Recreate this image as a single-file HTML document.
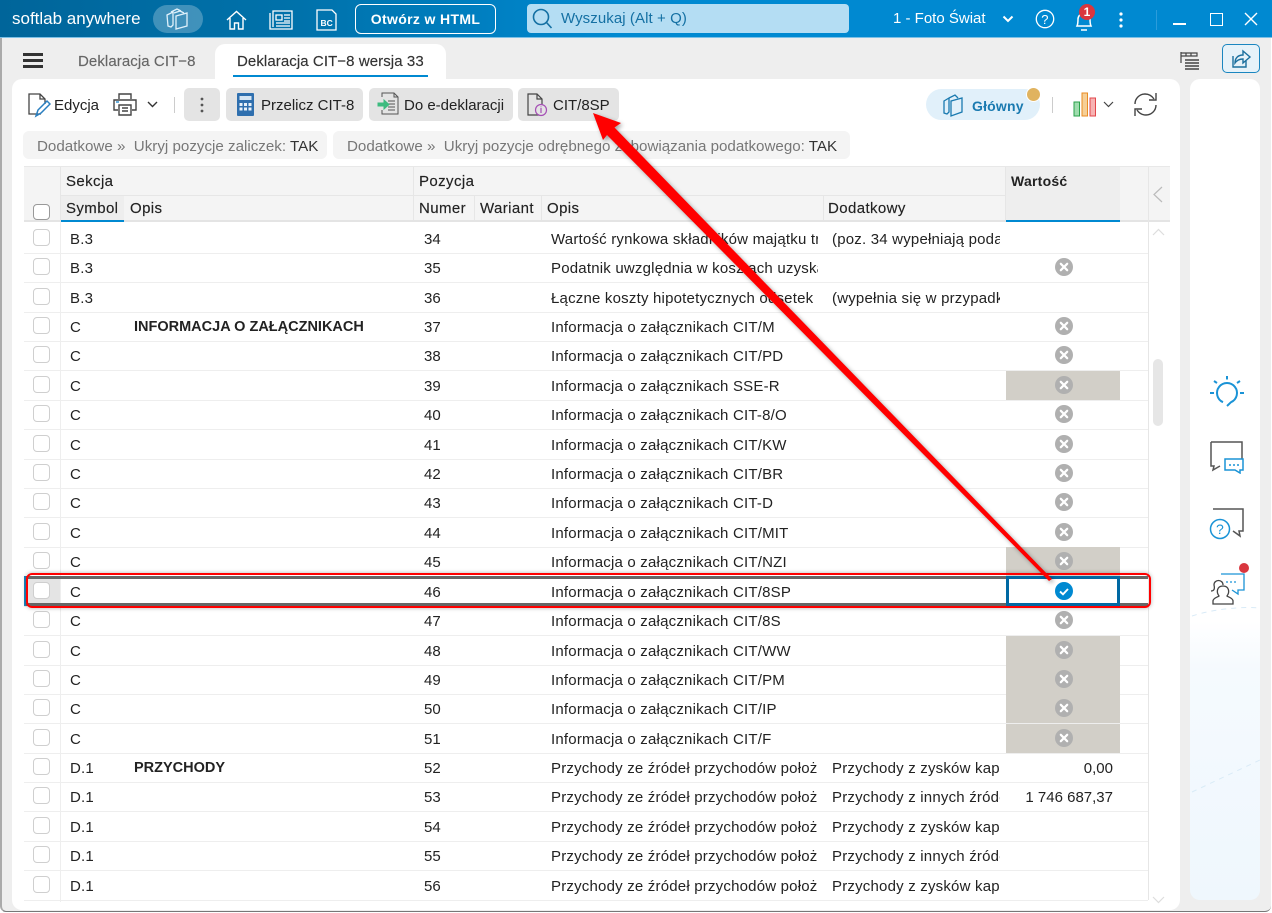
<!DOCTYPE html>
<html lang="pl"><head><meta charset="utf-8"><title>Deklaracja CIT-8</title>
<style>
html,body{margin:0;padding:0}
body{width:1272px;height:913px;overflow:hidden;position:relative;background:#fff;font-family:"Liberation Sans",sans-serif;font-size:15px;color:#222}
.a{position:absolute}
.win{left:0;top:0;width:1269px;height:911px;background:#eee;border-left:2px solid #aaa;border-bottom:1.500px solid #777;box-sizing:content-box;border-radius:0 0 6px 6px}
.tb{left:0;top:0;width:1272px;height:37px;background:linear-gradient(90deg,#00659a 0,#0072ab 300px,#0089d1 620px,#0089d1 100%);border-bottom:1px solid #7cc0e6}
.card{left:12px;top:79px;width:1168px;height:831px;background:#fff;border-radius:10px}
.side{left:1190px;top:79px;width:70px;height:821px;border-radius:10px;background:linear-gradient(180deg,#fff 0,#fff 66%,#f5fafe 72%,#eff7fd 100%)}
.btn{background:#e4e4e4;border-radius:5px;height:33px;top:88px;line-height:33px}
.chip{top:131px;height:28px;line-height:32px;background:#f4f4f4;border-radius:6px;color:#777;white-space:nowrap;font-size:15.150px}
.chip b{font-weight:400;color:#333}
.hd{left:24px;top:166px;width:1146px;height:53px;background:#f4f4f4;border-top:1px solid #e8e8e8;border-bottom:2px solid #e4e4e4;box-sizing:content-box}
.ht{position:absolute;font-weight:400;color:#222;letter-spacing:.4px;white-space:nowrap;font-size:15px;line-height:17px;-webkit-text-stroke:.15px #222}
.vl{position:absolute;width:1px;background:#e6e6e6}
.r{position:absolute;left:0;width:1148px;height:29px;line-height:31px;white-space:nowrap;letter-spacing:.2px}
.r:after{content:"";position:absolute;left:24px;right:0;bottom:-1px;height:1px;background:#eee}
.r span,.r i,.r svg{position:absolute;font-style:normal}
.c{left:33px;top:5px;width:15px;height:15px;border:1px solid #cfcfcf;border-radius:4px;background:#fff}
.s{left:70px}.t{left:134px;font-weight:700;letter-spacing:0;font-size:14.500px}.n{left:424px;letter-spacing:0}
.o{left:551px;width:267px;overflow:hidden}
.d{left:832px;width:168px;overflow:hidden}
.v{left:1000px;width:113px;text-align:right;letter-spacing:0}
.g{left:1006px;top:0;width:114px;height:29px;background:#d2cfc8}
.x{left:1055px;top:5px;width:18px;height:18px}
</style></head><body>
<svg width="0" height="0" style="position:absolute"><defs>
<symbol id="xi" viewBox="0 0 18 18"><circle cx="9" cy="9" r="9" fill="#b0b0b0"/><path d="M5.800 5.800l6.400 6.400M12.200 5.800l-6.400 6.400" stroke="#fff" stroke-width="2.200" stroke-linecap="round"/></symbol>
</defs></svg>
<div class="a win"></div>
<div class="a tb"></div>
<div class="a" style="left:12px;top:8px;color:#fff;font-size:17px;line-height:21px">softlab anywhere</div>
<div class="a" style="left:153px;top:5px;width:50px;height:28px;border-radius:14px;background:rgba(255,255,255,.25)"></div>
<svg class="a" style="left:165px;top:7px" width="26" height="24" fill="none" stroke="#dff1fb" stroke-width="1.300"><path d="M2 8l6-3v13l-2 2-3-1zM6 5l6-3 4 2M9 6l6-2 4 2"/><path d="M11 9l11-3v13l-11 3z"/></svg>
<svg class="a" style="left:226px;top:10px" width="21" height="21" fill="none" stroke="#fff" stroke-width="1.400"><path d="M1 10L10.500 1.500 20 10M4 8v11h4.500v-6h4v6H17V8"/></svg>
<svg class="a" style="left:269px;top:10px" width="24" height="20" fill="none" stroke="#fff" stroke-width="1.300"><path d="M1 3v16h22V1H4v16"/><path d="M7 5h6v5H7zM15 5h6M15 8h6M15 11h6M7 13h14M7 16h14"/></svg>
<svg class="a" style="left:316px;top:9px" width="21" height="22" fill="none" stroke="#fff" stroke-width="1.300"><path d="M1 1h15l4 4v16H1z"/><text x="4.500" y="17" font-family="Liberation Sans" font-size="8.500" font-weight="700" fill="#fff" stroke="none">BC</text></svg>
<div class="a" style="left:355px;top:4px;width:139px;height:28px;border:1.500px solid #fff;border-radius:6px;text-align:center;line-height:28px;color:#fff;font-weight:700;font-size:14px;letter-spacing:.35px">Otwórz w HTML</div>
<div class="a" style="left:527px;top:4px;width:322px;height:29px;background:#b4ddf3;border-radius:4px;line-height:29px;color:#1470a3;text-indent:34px;font-size:15px;letter-spacing:.08px">Wyszukaj (Alt + Q)</div>
<svg class="a" style="left:531px;top:7px" width="22" height="23" fill="none" stroke="#1470a3" stroke-width="1.600"><circle cx="10" cy="10" r="7.500"/><path d="M15.500 15.500l5 5.500"/></svg>
<div class="a" style="left:893px;top:9px;color:#fff;font-size:15px;line-height:20px">1 - Foto Świat</div>
<svg class="a" style="left:1002px;top:15px" width="12" height="8" fill="none" stroke="#fff" stroke-width="2"><path d="M1.500 1.500L6 6l4.500-4.500"/></svg>
<svg class="a" style="left:1035px;top:9px" width="20" height="20" fill="none" stroke="#fff" stroke-width="1.300"><circle cx="10" cy="10" r="8.700"/><text x="6.200" y="15" font-family="Liberation Sans" font-size="13" fill="#fff" stroke="none">?</text></svg>
<svg class="a" style="left:1074px;top:8px" width="20" height="24" fill="none" stroke="#fff" stroke-width="1.500"><path d="M3 18c1-2 1-4 1-7 0-3 3-6 6-6s6 3 6 6c0 3 0 5 1 7z"/><path d="M7 22h6"/></svg>
<div class="a" style="left:1079px;top:4px;width:16px;height:16px;border-radius:8px;background:#d9363e;color:#fff;font-weight:700;font-size:12px;line-height:16px;text-align:center">1</div>
<svg class="a" style="left:1119px;top:12px" width="4" height="16" fill="#fff"><circle cx="2" cy="2" r="1.600"/><circle cx="2" cy="8" r="1.600"/><circle cx="2" cy="14" r="1.600"/></svg>
<div class="a" style="left:1156px;top:10px;width:1px;height:20px;background:#2b9cdb"></div>
<div class="a" style="left:1173px;top:23px;width:13px;height:1.500px;background:#fff"></div>
<div class="a" style="left:1210px;top:13px;width:11px;height:11px;border:1.500px solid #fff"></div>
<svg class="a" style="left:1244px;top:12px" width="14" height="14" stroke="#fff" stroke-width="1.400"><path d="M1 1l12 12M13 1L1 13"/></svg>

<div class="a" style="left:23px;top:53px;width:20px;height:2.500px;background:#333"></div>
<div class="a" style="left:23px;top:59px;width:20px;height:2.500px;background:#333"></div>
<div class="a" style="left:23px;top:65px;width:20px;height:2.500px;background:#333"></div>
<div class="a" style="left:78px;top:52px;color:#666;font-size:15px;line-height:20px;letter-spacing:.08px;-webkit-text-stroke:.15px #666">Deklaracja CIT−8</div>
<div class="a" style="left:215px;top:44px;width:231px;height:36px;background:#fff;border-radius:10px 10px 0 0"></div>
<div class="a" style="left:237px;top:52px;color:#333;font-size:15px;line-height:20px;letter-spacing:.08px;-webkit-text-stroke:.15px #333">Deklaracja CIT−8 wersja 33</div>
<div class="a" style="left:233px;top:75px;width:195px;height:2px;background:#0089d1"></div>
<svg class="a" style="left:1179px;top:50px" width="22" height="22" fill="none" stroke="#444" stroke-width="1.200"><path d="M2 2v11M2 3h5v3H2M7 3h5v3H7M12 3h6v3h-6"/><path d="M6 10h14M6 13h14M6 16h14M6 19h14" stroke-width="1.500"/></svg>
<div class="a" style="left:1222px;top:44px;width:36px;height:27px;border:1.500px solid #1a86c0;border-radius:5px;background:#e6f2f9"></div>
<svg class="a" style="left:1230px;top:47px" width="22" height="24" fill="none" stroke="#1a6f9e" stroke-width="1.400"><path d="M3 9v11h13v-6"/><path d="M5 16c0-5 3-8 8-8V4l7 6-7 6v-4c-3 0-6 1-8 4z"/></svg>

<div class="a card"></div>
<div class="a side"></div>

<svg class="a" style="left:27px;top:92px" width="24" height="26" fill="none" stroke="#444" stroke-width="1.300"><path d="M14 22H2V2h11l5 5v5"/><path d="M13 2v5h5"/><path d="M9 24l2-6 9-9 3 3-9 9z" stroke="#2a7fc0" stroke-width="1.500"/></svg>
<div class="a" style="left:54px;top:96px;line-height:20px">Edycja</div>
<svg class="a" style="left:113px;top:92px" width="24" height="25" fill="none" stroke="#444" stroke-width="1.400"><path d="M6 7V2h12v5"/><path d="M5 18H1V8h22v10h-4"/><path d="M6 13h12v10H6zM9 16h6M9 19h6"/><path d="M3 10h3" stroke="#2a8fd0"/></svg>
<svg class="a" style="left:147px;top:101px" width="11" height="7" fill="none" stroke="#333" stroke-width="1.400"><path d="M1 1l4.500 4.500L10 1"/></svg>
<div class="a" style="left:174px;top:97px;width:1px;height:16px;background:#ccc"></div>
<div class="a btn" style="left:184px;width:36px"></div>
<svg class="a" style="left:200px;top:97px" width="4" height="16" fill="#555"><circle cx="2" cy="2" r="1.400"/><circle cx="2" cy="8" r="1.400"/><circle cx="2" cy="14" r="1.400"/></svg>
<div class="a btn" style="left:226px;width:137px"></div>
<svg class="a" style="left:237px;top:93px" width="17" height="23"><rect width="17" height="23" rx="1" fill="#2f6fae"/><rect x="2.500" y="3" width="12" height="4" fill="#d5e5f3"/><g fill="#e8f1f9"><rect x="2.500" y="10" width="3" height="3"/><rect x="7" y="10" width="3" height="3"/><rect x="11.500" y="10" width="3" height="3"/><rect x="2.500" y="14.500" width="3" height="3"/><rect x="7" y="14.500" width="3" height="3"/><rect x="11.500" y="14.500" width="3" height="3"/></g></svg>
<div class="a" style="left:261px;top:96px;line-height:20px">Przelicz CIT-8</div>
<div class="a btn" style="left:369px;width:144px"></div>
<svg class="a" style="left:377px;top:92px" width="24" height="24" fill="none" stroke="#555" stroke-width="1"><path d="M5 5V1h12l4 4v17H5v-4M17 1v4h4M11 9h7M11 12h7M11 15h7M11 18h7"/><path d="M1 11h6V8l5 4.500-5 4.500v-3H1z" fill="#3dbb7f" stroke="#3dbb7f"/></svg>
<div class="a" style="left:404px;top:96px;line-height:20px">Do e-deklaracji</div>
<div class="a btn" style="left:518px;width:101px"></div>
<svg class="a" style="left:526px;top:93px" width="22" height="24" fill="none" stroke="#444" stroke-width="1.200"><path d="M13 22H2V1h9l5 5v6"/><path d="M11 1v5h5"/><circle cx="15" cy="17" r="5.500" stroke="#a54fb5"/><path d="M15 15v5M15 13.500v.800" stroke="#a54fb5"/></svg>
<div class="a" style="left:553px;top:96px;line-height:20px">CIT/8SP</div>

<div class="a" style="left:926px;top:89px;width:114px;height:31px;border-radius:16px;background:#e1f0fa"></div>
<svg class="a" style="left:942px;top:93px" width="22" height="24" fill="none" stroke="#1a7ab0" stroke-width="1.300"><path d="M2 8l5-3v14l-2 2-3-1zM7 5l6-3 3 3"/><path d="M9 8l11-3v14l-11 4z"/></svg>
<div class="a" style="left:972px;top:96px;line-height:20px;color:#1a7ab0;font-weight:700;font-size:14px;letter-spacing:.2px">Główny</div>
<div class="a" style="left:1026px;top:87px;width:13px;height:13px;border-radius:50%;background:#e0b35f;border:1.500px solid #fff"></div>
<div class="a" style="left:1052px;top:97px;width:1px;height:16px;background:#ccc"></div>
<svg class="a" style="left:1073px;top:92px" width="24" height="25"><rect x="1" y="10" width="5.500" height="14" fill="#9fdcae" stroke="#2aa24b"/><rect x="9" y="1" width="5.500" height="23" fill="#f6cf96" stroke="#e98b23"/><rect x="17" y="6" width="5.500" height="18" fill="#f7b3b3" stroke="#e2474b"/></svg>
<svg class="a" style="left:1103px;top:101px" width="11" height="7" fill="none" stroke="#444" stroke-width="1.200"><path d="M1 1l4.500 4.500L10 1"/></svg>
<svg class="a" style="left:1133px;top:92px" width="25" height="25" fill="none" stroke="#444" stroke-width="1.400"><path d="M2 12C2 6 7 2 12 2c4 0 7 2 9 5"/><path d="M23 1v7h-7"/><path d="M23 13c0 6-5 10-10 10-4 0-7-2-9-5"/><path d="M2 24v-7h7"/></svg>

<div class="a chip" style="left:23px;width:304px;text-indent:14px">Dodatkowe »&nbsp; Ukryj pozycje zaliczek: <b>TAK</b></div>
<div class="a chip" style="left:333px;width:517px;text-indent:14px">Dodatkowe »&nbsp; Ukryj pozycje odrębnego zobowiązania podatkowego: <b>TAK</b></div>

<div class="a hd"></div>
<div class="a" style="left:61px;top:195px;width:944px;height:1px;background:#e6e6e6"></div>
<div class="a" style="left:1006px;top:167px;width:114px;height:53px;background:#eee"></div>
<div class="a" style="left:61px;top:196px;width:63px;height:24px;background:#eee"></div>
<div class="vl" style="left:60px;top:167px;height:53px"></div>
<div class="vl" style="left:413px;top:167px;height:53px"></div>
<div class="vl" style="left:474px;top:195px;height:25px"></div>
<div class="vl" style="left:541px;top:195px;height:25px"></div>
<div class="vl" style="left:823px;top:195px;height:25px"></div>
<div class="vl" style="left:1005px;top:167px;height:53px"></div>
<div class="vl" style="left:1148px;top:167px;height:733px"></div>
<div class="vl" style="left:60px;top:222px;height:680px;background:#eee"></div>
<div class="ht" style="left:66px;top:173px">Sekcja</div>
<div class="ht" style="left:419px;top:173px">Pozycja</div>
<div class="ht" style="left:1011px;top:173px;font-size:14px;font-weight:700;letter-spacing:.25px;-webkit-text-stroke:0">Wartość</div>
<div class="ht" style="left:66px;top:200px">Symbol</div>
<div class="ht" style="left:130px;top:200px">Opis</div>
<div class="ht" style="left:419px;top:200px">Numer</div>
<div class="ht" style="left:480px;top:200px">Wariant</div>
<div class="ht" style="left:547px;top:200px">Opis</div>
<div class="ht" style="left:828px;top:200px">Dodatkowy</div>
<div class="a" style="left:61px;top:220px;width:63px;height:2px;background:#0089d1"></div>
<div class="a" style="left:1006px;top:220px;width:114px;height:2px;background:#0089d1"></div>
<div class="a" style="left:33px;top:204px;width:15px;height:14px;border:1px solid #999;border-radius:4px;background:#fff"></div>
<svg class="a" style="left:1152px;top:186px" width="11" height="17" fill="none" stroke="#bbb" stroke-width="1.200"><path d="M10 1L2 8.500l8 7.500"/></svg>
<svg class="a" style="left:1152px;top:228px" width="13" height="8" fill="none" stroke="#ddd" stroke-width="1.200"><path d="M1 7l5.500-5.500L12 7"/></svg>
<svg class="a" style="left:1152px;top:896px" width="13" height="8" fill="none" stroke="#ddd" stroke-width="1.200"><path d="M1 1l5.500 5.500L12 1"/></svg>
<div class="a" style="left:1153px;top:359px;width:10px;height:67px;border-radius:5px;background:#e6e6e6"></div>

<div class="r" style="top:224px"><i class="c"></i><span class="s">B.3</span><span class="n">34</span><span class="o">Wartość rynkowa składników majątku trwałego</span><span class="d">(poz. 34 wypełniają podatnicy</span></div>
<div class="r" style="top:253px"><i class="c"></i><span class="s">B.3</span><span class="n">35</span><span class="o">Podatnik uwzględnia w kosztach uzyskania</span><svg class="x"><use href="#xi"/></svg></div>
<div class="r" style="top:283px"><i class="c"></i><span class="s">B.3</span><span class="n">36</span><span class="o">Łączne koszty hipotetycznych odsetek</span><span class="d">(wypełnia się w przypadku</span></div>
<div class="r" style="top:312px"><i class="c"></i><span class="s">C</span><span class="t">INFORMACJA O ZAŁĄCZNIKACH</span><span class="n">37</span><span class="o">Informacja o załącznikach CIT/M</span><svg class="x"><use href="#xi"/></svg></div>
<div class="r" style="top:341px"><i class="c"></i><span class="s">C</span><span class="n">38</span><span class="o">Informacja o załącznikach CIT/PD</span><svg class="x"><use href="#xi"/></svg></div>
<div class="r" style="top:371px"><i class="c"></i><span class="s">C</span><span class="n">39</span><span class="o">Informacja o załącznikach SSE-R</span><i class="g"></i><svg class="x"><use href="#xi"/></svg></div>
<div class="r" style="top:400px"><i class="c"></i><span class="s">C</span><span class="n">40</span><span class="o">Informacja o załącznikach CIT-8/O</span><svg class="x"><use href="#xi"/></svg></div>
<div class="r" style="top:430px"><i class="c"></i><span class="s">C</span><span class="n">41</span><span class="o">Informacja o załącznikach CIT/KW</span><svg class="x"><use href="#xi"/></svg></div>
<div class="r" style="top:459px"><i class="c"></i><span class="s">C</span><span class="n">42</span><span class="o">Informacja o załącznikach CIT/BR</span><svg class="x"><use href="#xi"/></svg></div>
<div class="r" style="top:488px"><i class="c"></i><span class="s">C</span><span class="n">43</span><span class="o">Informacja o załącznikach CIT-D</span><svg class="x"><use href="#xi"/></svg></div>
<div class="r" style="top:518px"><i class="c"></i><span class="s">C</span><span class="n">44</span><span class="o">Informacja o załącznikach CIT/MIT</span><svg class="x"><use href="#xi"/></svg></div>
<div class="r" style="top:547px"><i class="c"></i><span class="s">C</span><span class="n">45</span><span class="o">Informacja o załącznikach CIT/NZI</span><i class="g"></i><svg class="x"><use href="#xi"/></svg></div>
<div class="r" style="top:577px"><i class="a" style="left:24px;top:-1px;width:36px;height:29px;background:#e4e4e4"></i><i class="c"></i><span class="s">C</span><span class="n">46</span><span class="o">Informacja o załącznikach CIT/8SP</span></div>
<div class="r" style="top:606px"><i class="c"></i><span class="s">C</span><span class="n">47</span><span class="o">Informacja o załącznikach CIT/8S</span><svg class="x"><use href="#xi"/></svg></div>
<div class="r" style="top:636px"><i class="c"></i><span class="s">C</span><span class="n">48</span><span class="o">Informacja o załącznikach CIT/WW</span><i class="g"></i><svg class="x"><use href="#xi"/></svg></div>
<div class="r" style="top:665px"><i class="c"></i><span class="s">C</span><span class="n">49</span><span class="o">Informacja o załącznikach CIT/PM</span><i class="g"></i><svg class="x"><use href="#xi"/></svg></div>
<div class="r" style="top:694px"><i class="c"></i><span class="s">C</span><span class="n">50</span><span class="o">Informacja o załącznikach CIT/IP</span><i class="g"></i><svg class="x"><use href="#xi"/></svg></div>
<div class="r" style="top:724px"><i class="c"></i><span class="s">C</span><span class="n">51</span><span class="o">Informacja o załącznikach CIT/F</span><i class="g"></i><svg class="x"><use href="#xi"/></svg></div>
<div class="r" style="top:753px"><i class="c"></i><span class="s">D.1</span><span class="t">PRZYCHODY</span><span class="n">52</span><span class="o">Przychody ze źródeł przychodów położonych</span><span class="d">Przychody z zysków kapitałowych</span><span class="v">0,00</span></div>
<div class="r" style="top:782px"><i class="c"></i><span class="s">D.1</span><span class="n">53</span><span class="o">Przychody ze źródeł przychodów położonych</span><span class="d">Przychody z innych źródeł</span><span class="v">1 746 687,37</span></div>
<div class="r" style="top:812px"><i class="c"></i><span class="s">D.1</span><span class="n">54</span><span class="o">Przychody ze źródeł przychodów położonych</span><span class="d">Przychody z zysków kapitałowych</span></div>
<div class="r" style="top:841px"><i class="c"></i><span class="s">D.1</span><span class="n">55</span><span class="o">Przychody ze źródeł przychodów położonych</span><span class="d">Przychody z innych źródeł</span></div>
<div class="r" style="top:871px"><i class="c"></i><span class="s">D.1</span><span class="n">56</span><span class="o">Przychody ze źródeł przychodów położonych</span><span class="d">Przychody z zysków kapitałowych</span></div>

<div class="a" style="left:26px;top:576px;width:1122px;height:3px;background:#666"></div>
<div class="a" style="left:26px;top:603px;width:1122px;height:3px;background:#666"></div>
<div class="a" style="left:24px;top:576px;width:2px;height:30px;background:#1a86c0"></div>
<div class="a" style="left:1006px;top:576px;width:108px;height:24px;border:3px solid #0068a3"></div>
<svg class="a" style="left:1055px;top:582px" width="18" height="18"><circle cx="9" cy="9" r="9" fill="#0089d1"/><path d="M5 9.500l3 2.800 5-5.300" fill="none" stroke="#fff" stroke-width="1.900"/></svg>
<div class="a" style="left:26px;top:573px;width:1121px;height:31px;border:2px solid #f00;border-radius:6px;box-shadow:0 0 4px rgba(0,0,0,.3)"></div>

<svg class="a" style="left:0;top:0;filter:drop-shadow(2px 2px 2px rgba(0,0,0,.35))" width="1272" height="913"><path d="M593 113L621 123 614.500 127.500 1052 579 1049 581 607 135 603 140z" fill="#f00"/></svg>

<svg class="a" style="left:1209px;top:375px" width="36" height="34" fill="none" stroke="#1a93d6" stroke-width="2"><path d="M14 27.200a10 10 0 1 1 8 0l-4 3.800"/><path d="M18 1v3.500M5 6l3 2M31 6l-3 2M1 18h4M31 18h4"/></svg>
<svg class="a" style="left:1209px;top:440px" width="36" height="34" fill="none" stroke="#555" stroke-width="1.500"><path d="M2 2h31v17M2 2v24h3l-1 4 7-4"/><path d="M16 19h18v11h-3v3l-5-3H16z" fill="#fff" stroke="#1a93d6"/><path d="M20 25h2M24 25h2M28 25h2" stroke="#1a93d6"/></svg>
<svg class="a" style="left:1209px;top:507px" width="36" height="35" fill="none" stroke="#555" stroke-width="1.500"><path d="M4 2h30v22h-4l1 5-7-5"/><circle cx="11" cy="22" r="9.500" fill="#fff" stroke="#1a93d6"/><text x="7" y="27" font-family="Liberation Sans" font-size="14" fill="#1a93d6" stroke="none">?</text></svg>
<svg class="a" style="left:1209px;top:571px" width="36" height="36" fill="none" stroke="#1a93d6" stroke-width="1.300"><path d="M12 3h23v16h-6v4l-6-4"/><path d="M17 11h2M21 11h2M25 11h2"/><g stroke="#444"><path d="M2 20c3 0 4-2 3-6 0-6 9-6 9 0"/><path d="M4 33v-3c0-3 5-4 6-5-3-4-2-10 4-10s7 6 4 10c1 1 6 2 6 5v3z" fill="#fff"/></g></svg>
<div class="a" style="left:1239px;top:563px;width:10px;height:10px;border-radius:50%;background:#d9363e"></div>
<svg class="a" style="left:1190px;top:590px" width="70" height="210" fill="none" stroke="#d9ebf7" stroke-width="1" stroke-dasharray="5 5"><path d="M2 26C20 20 50 16 70 18"/><path d="M2 202L70 170"/></svg>
</body></html>
